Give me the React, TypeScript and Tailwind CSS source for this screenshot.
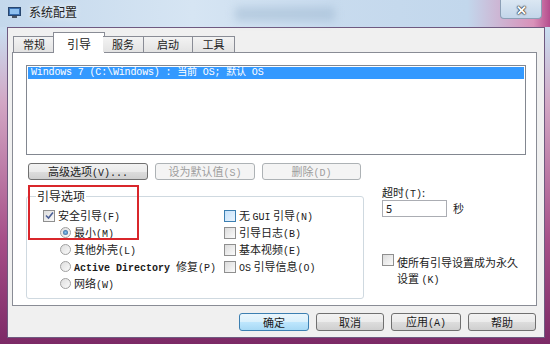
import React from 'react';

const mono = "font-['Liberation_Mono','Noto_Sans_CJK_SC',monospace]";

const Check: React.FC<{ checked?: boolean; focus?: boolean }> = ({ checked, focus }) => (
  <span
    className={
      'inline-flex items-center justify-center w-[12px] h-[12px] border shrink-0 ' +
      (focus
        ? 'border-[#3c7fb1] bg-[linear-gradient(135deg,#c6e2fb,#e9f4fe)]'
        : 'border-[#8f8f8f] bg-[linear-gradient(135deg,#dcdcdc,#fbfbfb)]')
    }
  >
    {checked && (
      <svg width="9" height="9" viewBox="0 0 9 9">
        <path d="M1 4.5 L3.5 7 L8 1.5" fill="none" stroke="#4a5f97" strokeWidth="1.6" />
      </svg>
    )}
  </span>
);

const Radio: React.FC<{ checked?: boolean }> = ({ checked }) => (
  <span className="inline-flex items-center justify-center w-[11px] h-[11px] rounded-full border border-[#a0a0a0] bg-[linear-gradient(135deg,#dedede,#fafafa)] shrink-0">
    {checked && <span className="w-[5px] h-[5px] rounded-full bg-[radial-gradient(circle,#8cc6f2,#1d4f86)]" />}
  </span>
);

const Btn: React.FC<{ label: React.ReactNode; w: string; h?: string; disabled?: boolean; def?: boolean }> = ({ label, w, h = 'h-[17px]', disabled, def }) => (
  <div
    className={
      'flex items-center justify-center rounded-[3px] border text-[11px] ' +
      w +
      ' ' +
      h +
      ' ' +
      (def
        ? 'border-[#3c7fb1] bg-[linear-gradient(180deg,#eaf6fd_0%,#d9f0fc_50%,#bee6fd_51%,#a7d9f5_100%)] text-[#1a1a1a]'
        : disabled
        ? 'border-[#adb2b5] bg-[#f4f4f4] text-[#9d9d9d]'
        : 'border-[#707070] bg-[linear-gradient(180deg,#f2f2f2_0%,#ebebeb_50%,#dddddd_51%,#cfcfcf_100%)] text-[#1a1a1a]')
    }
  >
    {label}
  </div>
);

const tabs = ['常规', '引导', '服务', '启动', '工具'];
const tabW = ['w-[42px]', 'w-[52px]', 'w-[41px]', 'w-[49px]', 'w-[42px]'];

export default function App() {
  return (
    <div className="w-[550px] h-[344px] flex flex-col overflow-hidden font-['Noto_Sans_CJK_SC',sans-serif] text-[11px] text-[#1a1a1a] bg-[linear-gradient(180deg,#c9dcef_0%,#c9dcef_9%,#d2a6c4_30%,#a64f88_70%,#7c2a66_100%)]">
      {/* Title bar */}
      <div className="h-[27px] shrink-0 flex items-start bg-[linear-gradient(90deg,#c4d8ec_0%,#d6e5f3_35%,#c8dbee_60%,#c2d7ec_85%,#d991b9_97%,#b54d8d_100%)]">
        <div className="flex items-center h-[24px] pl-[8px] gap-[8px]">
          <svg width="13" height="11" viewBox="0 0 13 11">
            <rect x="0.5" y="0.5" width="12" height="8" fill="#3a6fb0" stroke="#29466e" />
            <rect x="2" y="2" width="9" height="5" fill="#8fc0ef" />
            <rect x="4" y="9" width="5" height="2" fill="#4b5563" />
          </svg>
          <span className="text-[12px] text-[#222] [text-shadow:0_0_6px_#fff]">系统配置</span>
          <span className="ml-[150px] w-[100px] h-[14px] mt-[4px] bg-[#9db7d0] opacity-50 blur-[4px]" />
        </div>
        <div className="ml-auto mr-[8px] w-[42px] h-[19px] border border-t-0 border-[#8c9fb6] rounded-b-[4px] bg-[linear-gradient(180deg,#dbe7f3,#c3d6ea)] flex items-center justify-center">
          <span className="text-[13px] leading-none font-bold text-white [text-shadow:0_0_1px_#222,0_0_1px_#222,0_0_2px_#222]">✕</span>
        </div>
      </div>

      {/* Client area */}
      <div className="flex-1 ml-[7px] mr-[5px] mb-[6px] border border-[#6f5a80] bg-[#f0f0f0] flex flex-col pl-[4px] pr-[7px] pt-[4px]">
        {/* Tabs */}
        <div className="h-[20px] flex items-end pl-[1px] relative z-10">
          {tabs.map((t, i) =>
            i === 1 ? (
              <div
                key={t}
                className={`${tabW[i]} -mx-[2px] h-[21px] -mb-[1px] bg-white border border-b-0 border-[#898c95] flex items-start justify-center pt-[2px] text-[12px]`}
              >
                {t}
              </div>
            ) : (
              <div
                key={t}
                className={`${tabW[i]} h-[16px] border border-b-0 border-[#898c95] ${i === 0 ? '' : 'border-l-0'} ${i === 2 ? 'border-l' : ''} bg-[linear-gradient(180deg,#f3f3f3,#e3e3e3)] flex items-center justify-center text-[11px]`}
              >
                {t}
              </div>
            )
          )}
        </div>

        {/* Panel */}
        <div className="h-[254px] bg-white border border-[#898c95] flex flex-col pl-[13px] pr-[10px] pt-[12px]">
          <div className="h-[90px] border border-[#828790] bg-white p-[1px]">
            <div className={`h-[12px] bg-[#3399ff] text-white text-[10px] leading-[12px] pl-[3px] tracking-[-0.15px] ${mono}`}>
              Windows 7 (C:\Windows) : 当前 OS; 默认 OS
            </div>
          </div>

          <div className="flex gap-[7px] mt-[8px] pl-[2px]">
            <Btn w="w-[120px]" label={<span>高级选项<span className={mono + ' text-[10px]'}>(V)...</span></span>} />
            <Btn w="w-[100px]" disabled label={<span>设为默认值<span className={mono + ' text-[10px]'}>(S)</span></span>} />
            <Btn w="w-[99px]" disabled label={<span>删除<span className={mono + ' text-[10px]'}>(D)</span></span>} />
          </div>

          <div className="flex mt-[9px]">
            <fieldset className="relative w-[338px] h-[110px] border border-[#cfd9e0] rounded-[3px] px-[8px]">
              <legend className="ml-[1px] px-[1px] text-[12px] leading-[14px]">引导选项</legend>
              <div className="absolute left-[1px] -top-[18px] w-[111px] h-[55px] border-2 border-[#d9262b]" />
              <div className="flex pt-[4px] pl-[8px]">
                <div className="w-[181px] flex flex-col">
                  <div className="h-[17px] flex items-center gap-[3px]">
                    <Check checked />
                    <span>安全引导<span className={mono + ' text-[10px]'}>(F)</span></span>
                  </div>
                  <div className="h-[17px] flex items-center gap-[3px] pl-[17px]">
                    <Radio checked />
                    <span>最小<span className={mono + ' text-[10px]'}>(M)</span></span>
                  </div>
                  <div className="h-[17px] flex items-center gap-[3px] pl-[17px]">
                    <Radio />
                    <span>其他外壳<span className={mono + ' text-[10px]'}>(L)</span></span>
                  </div>
                  <div className="h-[17px] flex items-center gap-[3px] pl-[17px]">
                    <Radio />
                    <span>
                      <span className={mono + ' text-[10px] font-bold'}>Active Directory </span>修复
                      <span className={mono + ' text-[10px]'}>(P)</span>
                    </span>
                  </div>
                  <div className="h-[17px] flex items-center gap-[3px] pl-[17px]">
                    <Radio />
                    <span>网络<span className={mono + ' text-[10px]'}>(W)</span></span>
                  </div>
                </div>
                <div className="flex flex-col">
                  <div className="h-[17px] flex items-center gap-[3px]">
                    <Check focus />
                    <span>无 <span className={mono + ' text-[10px]'}>GUI</span> 引导<span className={mono + ' text-[10px]'}>(N)</span></span>
                  </div>
                  <div className="h-[17px] flex items-center gap-[3px]">
                    <Check />
                    <span>引导日志<span className={mono + ' text-[10px]'}>(B)</span></span>
                  </div>
                  <div className="h-[17px] flex items-center gap-[3px]">
                    <Check />
                    <span>基本视频<span className={mono + ' text-[10px]'}>(E)</span></span>
                  </div>
                  <div className="h-[17px] flex items-center gap-[3px]">
                    <Check />
                    <span><span className={mono + ' text-[10px]'}>OS</span> 引导信息<span className={mono + ' text-[10px]'}>(O)</span></span>
                  </div>
                </div>
              </div>
            </fieldset>

            <div className="ml-[18px] -mt-[4px] flex flex-col">
              <div className="h-[14px] leading-[14px]">
                超时<span className={mono + ' text-[10px]'}>(T)</span>:
              </div>
              <div className="flex items-center mt-[1px]">
                <div className="w-[65px] h-[17px] border border-[#abadb3] bg-white pl-[3px] leading-[15px]">5</div>
                <span className="ml-[6px]">秒</span>
              </div>
              <div className="flex items-start gap-[3px] mt-[37px]">
                <Check />
                <div className="flex flex-col leading-[16px] whitespace-nowrap">
                  <span>使所有引导设置成为永久</span>
                  <span>设置 <span className={mono + ' text-[10px]'}>(K)</span></span>
                </div>
              </div>
            </div>
          </div>
        </div>

        {/* Bottom buttons */}
        <div className="flex justify-end gap-[7px] mt-[7px] pr-[1px]">
          <Btn w="w-[70px]" h="h-[18px]" def label="确定" />
          <Btn w="w-[68px]" h="h-[18px]" label="取消" />
          <Btn w="w-[70px]" h="h-[18px]" label={<span>应用<span className={mono + ' text-[10px]'}>(A)</span></span>} />
          <Btn w="w-[68px]" h="h-[18px]" label="帮助" />
        </div>
      </div>
    </div>
  );
}
